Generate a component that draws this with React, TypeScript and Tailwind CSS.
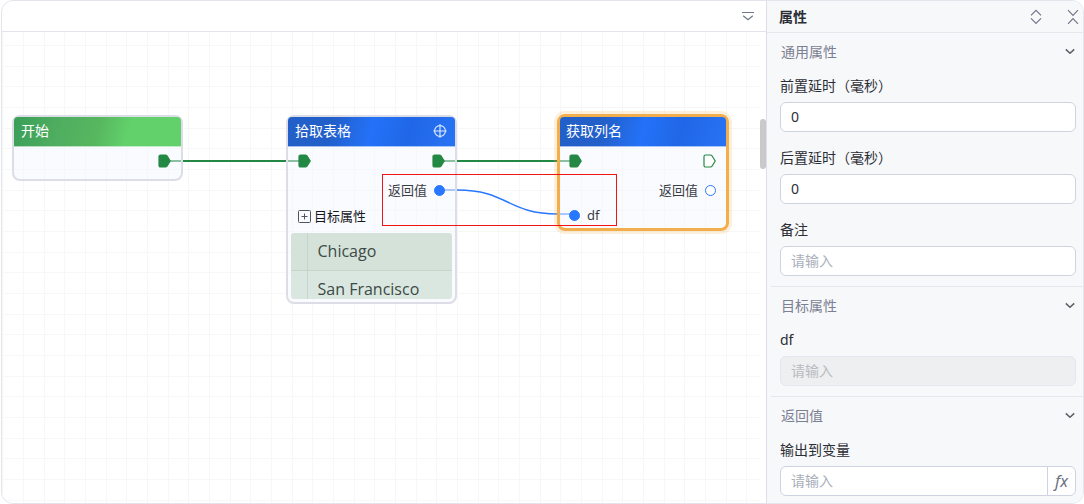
import React from 'react';
import { clsx } from 'clsx';

interface PortProps {
  filled?: boolean;
}

const FlowPort: React.FC<PortProps> = ({ filled = true }) => (
  <svg width="13" height="14" viewBox="0 0 13 14" className="shrink-0">
    <path
      d="M2.6 1H7.4Q8.4 1 9 1.8L12.2 7L9 12.2Q8.4 13 7.4 13H2.6Q1 13 1 11.4V2.6Q1 1 2.6 1Z"
      fill={filled ? '#238843' : '#ffffff'}
      stroke="#238843"
      strokeWidth="1.2"
    />
  </svg>
);

const DataPort: React.FC<PortProps> = ({ filled = true }) => (
  <span
    className={clsx(
      'size-[11px] shrink-0 rounded-full border border-[#2878ff]',
      filled ? 'bg-[#2878ff]' : 'bg-white',
    )}
  />
);

const TargetIcon = () => (
  <svg width="14" height="14" viewBox="0 0 14 14" fill="none" stroke="#dbe8ff" strokeWidth="1.2">
    <circle cx="7" cy="7" r="5.4" />
    <path d="M7 0.3V13.7M0.3 7H13.7" />
  </svg>
);

const PlusBoxIcon = () => (
  <svg width="13" height="13" viewBox="0 0 13 13" fill="none" stroke="#50545e">
    <rect x="0.5" y="0.5" width="12" height="12" rx="1" />
    <path d="M3.5 6.5H9.5M6.5 3.5V9.5" />
  </svg>
);

const ChevronIcon = () => (
  <svg width="12" height="12" viewBox="0 0 12 12" fill="none" stroke="#5c5f66" strokeWidth="1.5">
    <path d="M1.8 3.4L6 7.2L10.2 3.4" />
  </svg>
);

interface FlowNodeProps {
  title: string;
  className: string;
  headerClass: string;
  action?: React.ReactNode;
  children: React.ReactNode;
}

const FlowNode: React.FC<FlowNodeProps> = ({ title, className, headerClass, action, children }) => (
  <section className={clsx('absolute rounded-lg bg-[#f5f8ff]/50 text-[13px] text-[#3a3d45]', className)}>
    <header
      className={clsx(
        'flex h-[30px] items-center justify-between rounded-t border-b border-white/60 pb-px pr-2 text-sm text-white',
        headerClass,
      )}
    >
      <h3>{title}</h3>
      {action}
    </header>
    {children}
  </section>
);

const blueHeader =
  'bg-[linear-gradient(105deg,#225fc9_0%,#225fc9_26%,#2472f8_50%,#1f67e6_72%,#2873f5_100%)]';

const Canvas = () => (
  <div className="relative min-w-0 flex-1 overflow-hidden">
    <svg className="absolute inset-0 size-full" fill="none">
      <defs>
        <pattern id="grid" width="62" height="62" patternUnits="userSpaceOnUse" x="21" y="13">
          <path d="M0.5 0V62M21.5 0V62M41.5 0V62M0 0.5H62M0 21.5H62M0 41.5H62" stroke="#f7f7f8" />
        </pattern>
      </defs>
      <rect width="100%" height="100%" fill="url(#grid)" />
      <path d="M168 129H298M436 129H568" stroke="#238843" strokeWidth="2" />
      <path d="M438 158H455C506 158 505 182 556 182H572" stroke="#2878ff" strokeWidth="1.4" />
    </svg>

    <FlowNode
      title="开始"
      className="left-[10px] top-[83px] w-[171px] border-2 border-[#dcdde6] pb-1"
      headerClass="pl-[7px] bg-[linear-gradient(105deg,#3a9f58_0%,#4fae60_28%,#57b75f_50%,#62d16c_68%)]"
    >
      <div className="flex h-7 items-center justify-end px-[10px]">
        <FlowPort />
      </div>
    </FlowNode>

    <FlowNode
      title="拾取表格"
      className="left-[284px] top-[83px] w-[171px] border-2 border-[#dcdde6] pb-[3px]"
      headerClass={clsx('pl-[7px]', blueHeader)}
      action={
        <button type="button" aria-label="定位">
          <TargetIcon />
        </button>
      }
    >
      <div className="flex h-7 items-center justify-between px-[10px]">
        <FlowPort />
        <FlowPort />
      </div>
      <div className="flex h-[30px] items-center justify-end gap-[7px] px-[10px]">
        返回值
        <DataPort />
      </div>
      <button type="button" className="flex h-[22px] items-center gap-[3px] px-[10px] text-[#17181c]">
        <PlusBoxIcon />
        目标属性
      </button>
      <div className="mx-[3px] mt-[6px] h-[66px] overflow-hidden rounded-[3px]">
        <table className="w-full border-collapse text-left font-['Open_Sans','Noto_Sans',sans-serif] text-base text-[#3d4a46]">
          <tbody>
            {['Chicago', 'San Francisco'].map((city, i) => (
              <tr key={city} className={i === 0 ? 'bg-[#d5e2d9]' : 'bg-[#dae7e0]'}>
                <td className="w-4 border-b border-r border-[#c6d5cb]" />
                <td className="h-[37px] border-b border-[#c6d5cb] pl-[10px] leading-6">{city}</td>
              </tr>
            ))}
          </tbody>
        </table>
      </div>
    </FlowNode>

    <FlowNode
      title="获取列名"
      className="left-[555px] top-[82px] w-[172px] border-[3px] border-[#f2ae4c] pb-[3px] ring-3 ring-[#f2ae4c]/20"
      headerClass={clsx('pl-[6px]', blueHeader)}
    >
      <div className="flex h-7 items-center justify-between pl-[9px] pr-[10px]">
        <FlowPort />
        <FlowPort filled={false} />
      </div>
      <div className="flex h-[30px] items-center justify-end gap-[7px] pl-[9px] pr-[10px]">
        返回值
        <DataPort filled={false} />
      </div>
      <div className="flex h-5 items-center gap-[7px] px-[9px]">
        <DataPort />
        df
      </div>
    </FlowNode>

    <div className="absolute left-[380px] top-[142px] h-[52px] w-[235px] border border-[#f01414]" />
  </div>
);

interface FieldProps {
  id: string;
  label: string;
  value?: string;
  disabled?: boolean;
  withFx?: boolean;
}

const Field: React.FC<FieldProps> = ({ id, label, value, disabled, withFx }) => (
  <div className="flex flex-col gap-[6px]">
    <label htmlFor={id} className="leading-5">
      {label}
    </label>
    <div
      className={clsx(
        'flex h-[30px] overflow-hidden rounded-md border',
        disabled ? 'border-[#e3e6f0] bg-[#edeff1]' : 'border-[#cfd3e0] bg-white',
      )}
    >
      <input
        id={id}
        type="text"
        defaultValue={value}
        placeholder="请输入"
        disabled={disabled}
        className={clsx(
          'min-w-0 flex-1 bg-transparent px-[10px] outline-none',
          disabled ? 'placeholder:text-[#b9bbc0]' : 'placeholder:text-[#a9aebb]',
        )}
      />
      {withFx && (
        <button
          type="button"
          className="w-7 border-l border-[#cfd3e0] text-base leading-none text-[#6b7183] italic"
        >
          fx
        </button>
      )}
    </div>
  </div>
);

interface PropertyGroupProps {
  title: string;
  children: React.ReactNode;
}

const PropertyGroup: React.FC<PropertyGroupProps> = ({ title, children }) => (
  <section className="ml-1 border-b border-[#e6e8ee] pb-[10px] pl-[9px] pr-[7px] pt-[9px] last:border-b-0">
    <button type="button" className="mb-[14px] flex h-5 w-full items-center justify-between text-[#7b7f92]">
      <span className="pl-px">{title}</span>
      <ChevronIcon />
    </button>
    <div className="flex flex-col gap-4">{children}</div>
  </section>
);

const PropertyPanel = () => (
  <aside className="flex w-[317px] shrink-0 flex-col border-l border-[#dcdfe6] bg-[#f7f8fa]">
    <header className="flex h-8 shrink-0 items-center justify-between border-b border-[#e6e8ee] pl-3 pr-[3px]">
      <h2 className="font-bold">属性</h2>
      <div className="flex gap-[23px]">
        <button type="button" aria-label="展开全部">
          <svg width="14" height="16" viewBox="0 0 14 16" fill="none" stroke="#71778a" strokeWidth="1.2">
            <path d="M2 6.4L7 1.4L12 6.4M2 9.4L7 14.4L12 9.4" />
          </svg>
        </button>
        <button type="button" aria-label="收起全部">
          <svg width="14" height="16" viewBox="0 0 14 16" fill="none" stroke="#71778a" strokeWidth="1.2">
            <path d="M2 1.2L7 6.4L12 1.2M2 14.8L7 9.6L12 14.8" />
          </svg>
        </button>
      </div>
    </header>
    <div className="min-h-0 flex-1 overflow-hidden">
      <PropertyGroup title="通用属性">
        <Field id="delay-before" label="前置延时（毫秒）" value="0" />
        <Field id="delay-after" label="后置延时（毫秒）" value="0" />
        <Field id="remark" label="备注" />
      </PropertyGroup>
      <PropertyGroup title="目标属性">
        <Field id="df" label="df" disabled />
      </PropertyGroup>
      <PropertyGroup title="返回值">
        <Field id="output" label="输出到变量" withFx />
      </PropertyGroup>
    </div>
  </aside>
);

export default function App() {
  return (
    <div className="h-screen bg-white pl-px font-['Noto_Sans','Noto_Sans_CJK_SC',sans-serif] text-sm text-[#2c2e35]">
      <div className="flex h-full overflow-hidden rounded-xl border border-[#e2e5eb]">
        <main className="flex min-w-0 flex-1 flex-col">
          <div className="flex h-[31px] shrink-0 items-center justify-end border-b border-[#e2e5eb] px-[11px]">
            <button type="button" aria-label="折叠工具栏">
              <svg width="14" height="12" viewBox="0 0 14 12" fill="none" stroke="#71778a" strokeWidth="1.2">
                <path d="M1 2.5H13M2.2 5.8L7 9.8L11.8 5.8" />
              </svg>
            </button>
          </div>
          <div className="flex min-h-0 flex-1">
            <Canvas />
            <div className="w-[6px] shrink-0 pt-[87px]">
              <div className="h-[50px] rounded-full bg-[#c9c9c9]" />
            </div>
          </div>
        </main>
        <PropertyPanel />
      </div>
    </div>
  );
}
